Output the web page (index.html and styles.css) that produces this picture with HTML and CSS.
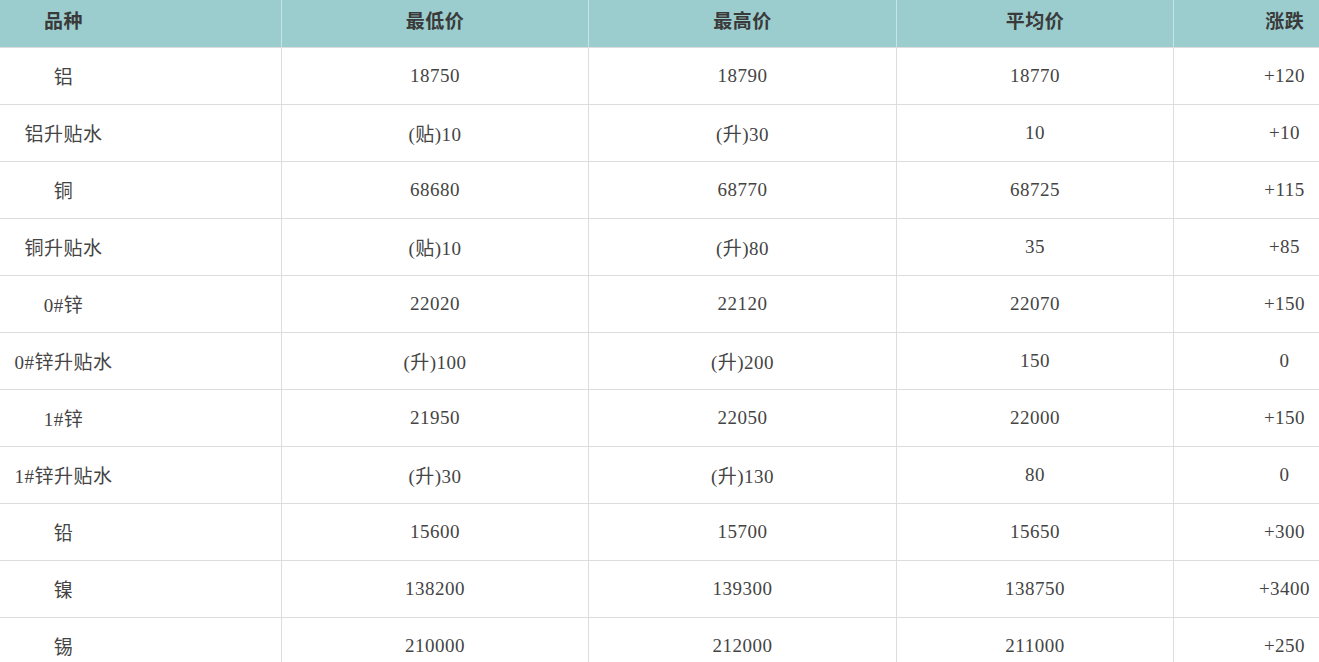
FILE: index.html
```html
<!DOCTYPE html>
<html lang="zh">
<head>
<meta charset="utf-8">
<title>价格表</title>
<link rel="stylesheet" href="styles.css">
</head>
<body>
<div class="wrap">
<table class="price">
<colgroup>
<col class="c1"><col class="c2"><col class="c3"><col class="c4"><col class="c5">
</colgroup>
<thead>
<tr><th>品种</th><th>最低价</th><th>最高价</th><th>平均价</th><th>涨跌</th></tr>
</thead>
<tbody>
<tr><td>铝</td><td>18750</td><td>18790</td><td>18770</td><td>+120</td></tr>
<tr><td>铝升贴水</td><td>(贴)10</td><td>(升)30</td><td>10</td><td>+10</td></tr>
<tr><td>铜</td><td>68680</td><td>68770</td><td>68725</td><td>+115</td></tr>
<tr><td>铜升贴水</td><td>(贴)10</td><td>(升)80</td><td>35</td><td>+85</td></tr>
<tr><td>0#锌</td><td>22020</td><td>22120</td><td>22070</td><td>+150</td></tr>
<tr><td>0#锌升贴水</td><td>(升)100</td><td>(升)200</td><td>150</td><td>0</td></tr>
<tr><td>1#锌</td><td>21950</td><td>22050</td><td>22000</td><td>+150</td></tr>
<tr><td>1#锌升贴水</td><td>(升)30</td><td>(升)130</td><td>80</td><td>0</td></tr>
<tr><td>铅</td><td>15600</td><td>15700</td><td>15650</td><td>+300</td></tr>
<tr><td>镍</td><td>138200</td><td>139300</td><td>138750</td><td>+3400</td></tr>
<tr><td>锡</td><td>210000</td><td>212000</td><td>211000</td><td>+250</td></tr>
</tbody>
</table>
</div>
</body>
</html>
```
FILE: styles.css
```css
html, body {
  margin: 0;
  padding: 0;
  background: #fff;
  overflow: hidden;
}
.wrap {
  width: 1319px;
  overflow: hidden;
}
.price {
  margin-left: -155px;
  width: 1550px;
  table-layout: fixed;
  border-collapse: collapse;
  font-family: "Liberation Serif", "Noto Sans CJK SC", serif;
  font-size: 19px;
  letter-spacing: 0.5px;
  color: #444;
}
.c1 { width: 436px; }
.c2 { width: 307px; }
.c3 { width: 308px; }
.c4 { width: 277px; }
.c5 { width: 222px; }
.price th {
  box-sizing: border-box;
  background: #9bcdce;
  height: 47px;
  padding: 0 0 8px;
  font-weight: bold;
  font-size: 19px;
  color: #3a3a3a;
  text-align: center;
  border-left: 1px solid #c9e4e5;
  border-bottom: 1px solid #ddd;
}
.price td {
  box-sizing: border-box;
  height: 57px;
  padding: 0;
  text-align: center;
  border: 1px solid #ddd;
  border-top: none;
}
```
